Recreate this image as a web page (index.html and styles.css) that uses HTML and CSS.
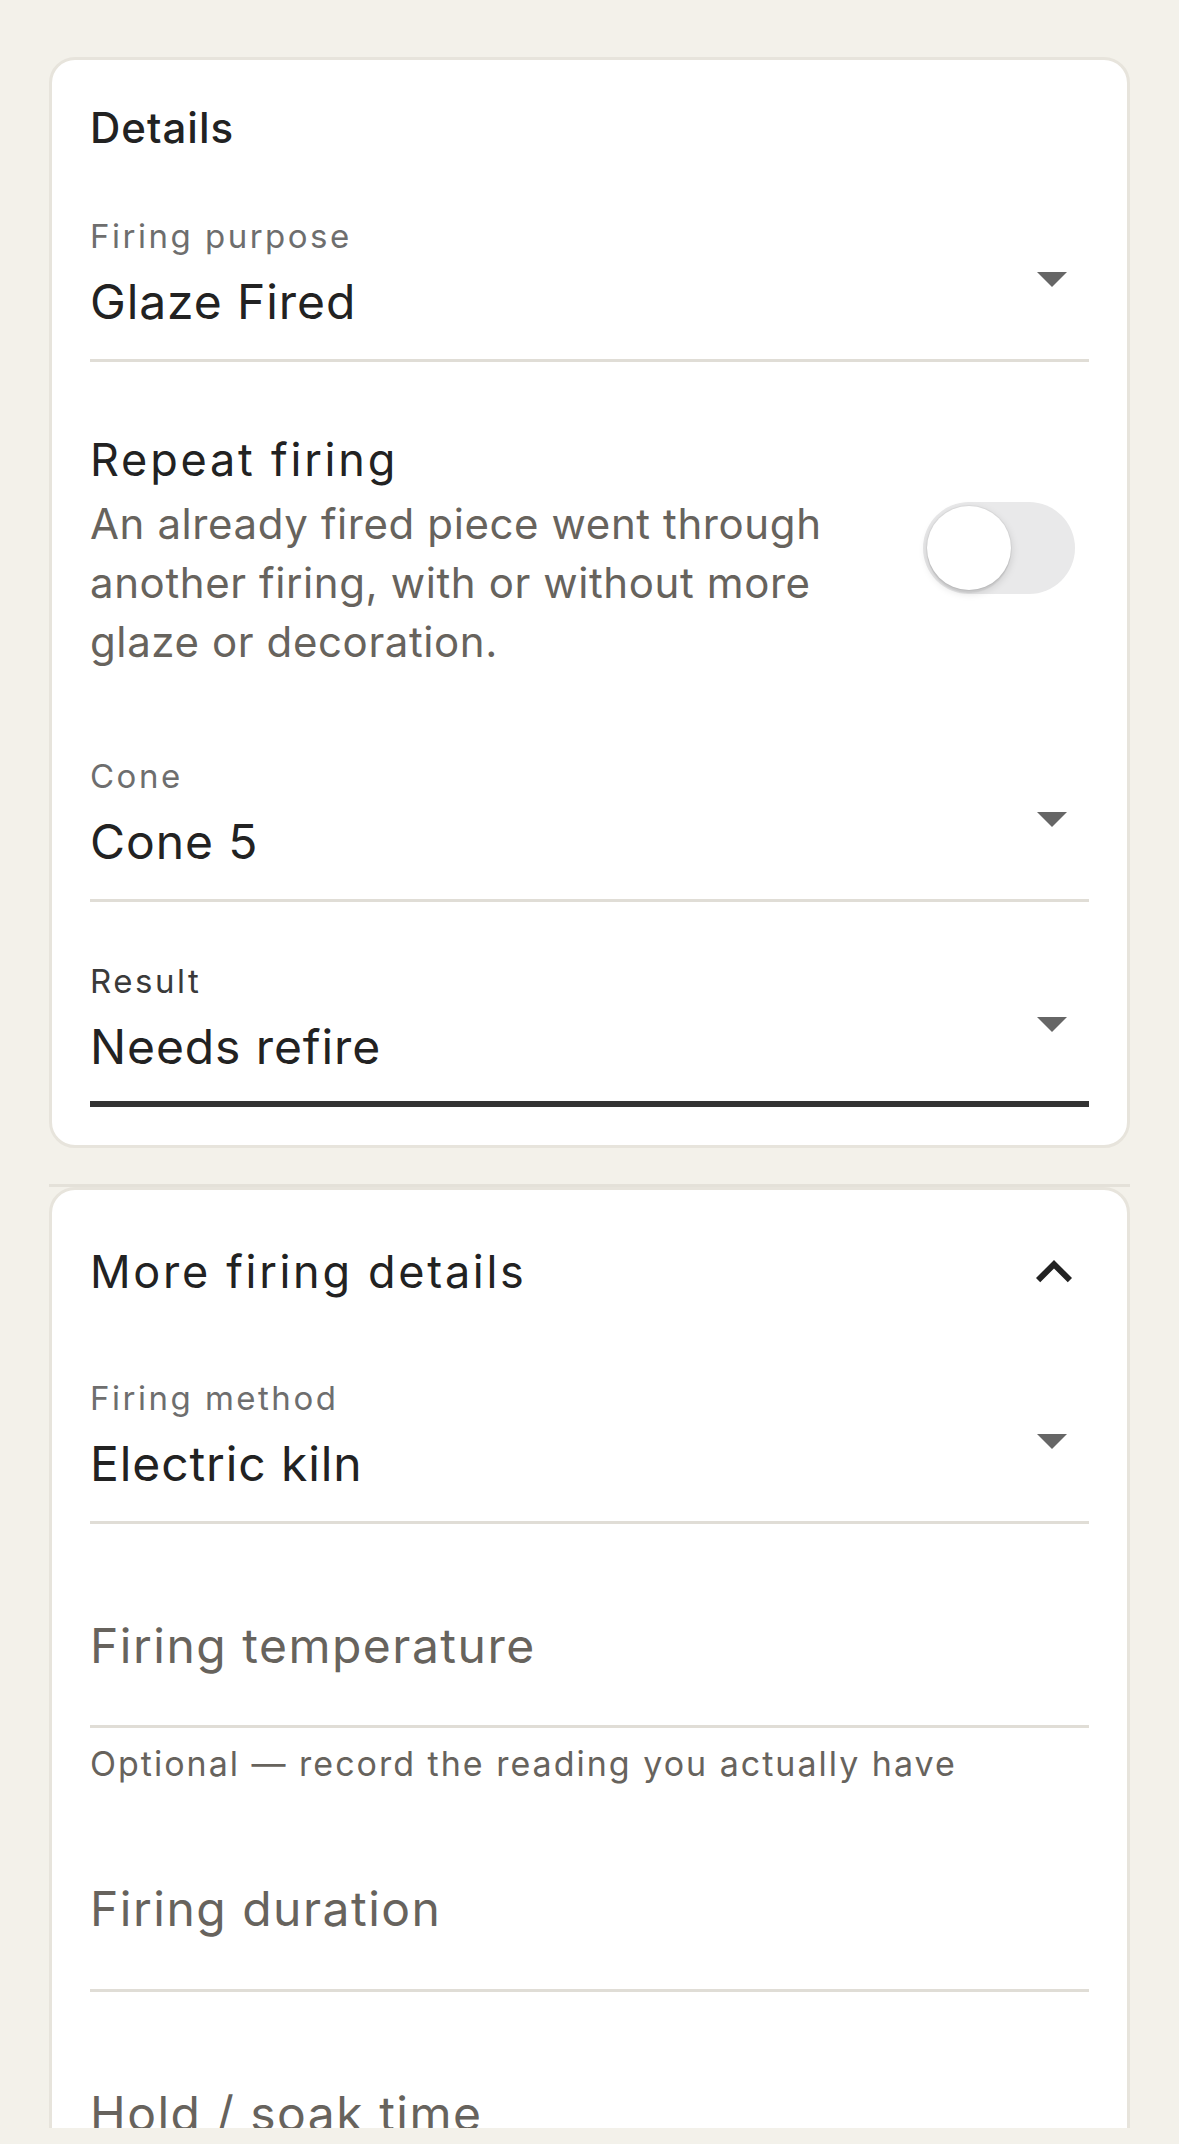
FILE: index.html
```html
<!DOCTYPE html>
<html lang="en">
<head>
<meta charset="utf-8">
<title>Firing details</title>
<link rel="stylesheet" href="styles.css">
</head>
<body>
<main class="page">
  <section class="card card-details">
    <h2 class="card-title">Details</h2>

    <div class="field field-first">
      <div class="field-label">Firing purpose</div>
      <div class="field-row">
        <span class="field-value">Glaze Fired</span>
        <span class="caret"></span>
      </div>
      <div class="underline"></div>
    </div>

    <div class="switch-row">
      <div class="switch-text">
        <div class="switch-title">Repeat firing</div>
        <p class="switch-desc">An already fired piece went through another firing, with or without more glaze or decoration.</p>
      </div>
      <div class="switch"><span class="thumb"></span></div>
    </div>

    <div class="field field-cone">
      <div class="field-label">Cone</div>
      <div class="field-row">
        <span class="field-value">Cone 5</span>
        <span class="caret"></span>
      </div>
      <div class="underline"></div>
    </div>

    <div class="field field-result">
      <div class="field-label field-label-focused">Result</div>
      <div class="field-row">
        <span class="field-value">Needs refire</span>
        <span class="caret"></span>
      </div>
      <div class="underline underline-focused"></div>
    </div>
  </section>

  <div class="divider"></div>

  <section class="card card-more">
    <div class="accordion-head">
      <h2 class="accordion-title">More firing details</h2>
      <svg class="chevron" width="72" height="72" viewBox="0 0 24 24" aria-hidden="true"><path d="M12 8l-6 6 1.41 1.41L12 10.83l4.59 4.58L18 14z"/></svg>
    </div>

    <div class="field field-method">
      <div class="field-label">Firing method</div>
      <div class="field-row">
        <span class="field-value">Electric kiln</span>
        <span class="caret"></span>
      </div>
      <div class="underline"></div>
    </div>

    <div class="text-field tf-temp">
      <div class="tf-placeholder">Firing temperature</div>
      <div class="underline tf-underline"></div>
    </div>
    <p class="helper">Optional — record the reading you actually have</p>

    <div class="text-field tf-duration">
      <div class="tf-placeholder">Firing duration</div>
      <div class="underline tf-underline"></div>
    </div>

    <div class="text-field tf-hold">
      <div class="tf-placeholder">Hold / soak time</div>
      <div class="underline tf-underline"></div>
    </div>
  </section>
</main>
<div class="bottom-strip"></div>
</body>
</html>
```

FILE: styles.css
```css
* {
  box-sizing: border-box;
  margin: 0;
  padding: 0;
}

html, body {
  background: #f3f1ea;
  overflow: hidden;
}

body {
  font-family: Inter, "Noto Sans", sans-serif;
  color: #222222;
}

.page {
  display: flex;
  flex-direction: column;
  padding: 57px 49px 0 49px;
}

.card {
  background: #ffffff;
  border: 3px solid #e7e4dc;
  border-radius: 26px;
  padding: 0 38px;
}

.card-details {
  padding-top: 43px;
  padding-bottom: 38px;
}

.card-title {
  font-size: 42px;
  line-height: 50px;
  font-weight: 500;
  letter-spacing: 1px;
}

/* select fields */
.field-first { margin-top: 63px; }
.field-cone { margin-top: 85px; }
.field-result { margin-top: 59px; }
.field-method { margin-top: 79px; }

.field-label {
  font-size: 33px;
  line-height: 40px;
  color: #6e6e6e;
  letter-spacing: 2.5px;
}

.field-label-focused {
  color: #3a3a3a;
}

.field-row {
  display: flex;
  justify-content: space-between;
  align-items: flex-start;
  margin-top: 18px;
}

.field-value {
  font-size: 48px;
  line-height: 56px;
  letter-spacing: 0.9px;
  color: #222222;
}

.caret {
  width: 0;
  height: 0;
  border-left: 15px solid transparent;
  border-right: 15px solid transparent;
  border-top: 15px solid #666666;
  margin-top: -2px;
  margin-right: 22px;
}

.underline {
  height: 3px;
  background: #e0ddd6;
  margin-top: 29px;
}

.underline-focused {
  height: 6px;
  background: #333333;
  margin-top: 26px;
}

/* switch */
.switch-row {
  display: flex;
  align-items: flex-start;
  gap: 60px;
  margin-top: 71px;
}

.switch-text {
  flex: 1;
}

.switch-title {
  font-size: 45px;
  line-height: 54px;
  letter-spacing: 2.8px;
  color: #222222;
}

.switch-desc {
  margin-top: 7px;
  font-size: 42px;
  line-height: 59px;
  letter-spacing: 0.6px;
  color: #67635d;
}

.switch {
  flex: none;
  width: 152px;
  height: 92px;
  border-radius: 46px;
  background: #e9e9ea;
  margin-top: 69px;
  margin-right: 14px;
  padding: 4px;
  display: flex;
  align-items: center;
}

.thumb {
  width: 84px;
  height: 84px;
  border-radius: 50%;
  background: #ffffff;
  box-shadow: 0 3px 8px rgba(0, 0, 0, 0.15), 0 3px 1px rgba(0, 0, 0, 0.06), 0 0 0 1px rgba(0, 0, 0, 0.04);
}

/* divider between cards */
.divider {
  height: 3px;
  background: #e4e1d9;
  margin-top: 36px;
}

/* accordion */
.card-more {
  padding-top: 55px;
  padding-bottom: 40px;
  border-bottom-left-radius: 0;
  border-bottom-right-radius: 0;
}

.accordion-head {
  display: flex;
  justify-content: space-between;
  align-items: flex-start;
}

.accordion-title {
  font-size: 45px;
  line-height: 54px;
  font-weight: 400;
  letter-spacing: 2.7px;
}

.chevron {
  flex: none;
  fill: #222222;
  margin: -9px -1px -9px 0;
}

/* text fields */
.tf-temp { margin-top: 94px; }
.tf-duration { margin-top: 97px; }
.tf-hold { margin-top: 94px; }

.tf-placeholder {
  font-size: 48px;
  line-height: 56px;
  letter-spacing: 1.5px;
  color: #67635d;
}

.tf-underline {
  margin-top: 51px;
}

.tf-duration .tf-underline {
  margin-top: 52px;
}

.helper {
  margin-top: 16px;
  font-size: 34px;
  line-height: 40px;
  letter-spacing: 2px;
  color: #67635d;
}

.bottom-strip {
  position: fixed;
  left: 0;
  right: 0;
  bottom: 0;
  height: 16px;
  background: #f3f1ea;
}
```
